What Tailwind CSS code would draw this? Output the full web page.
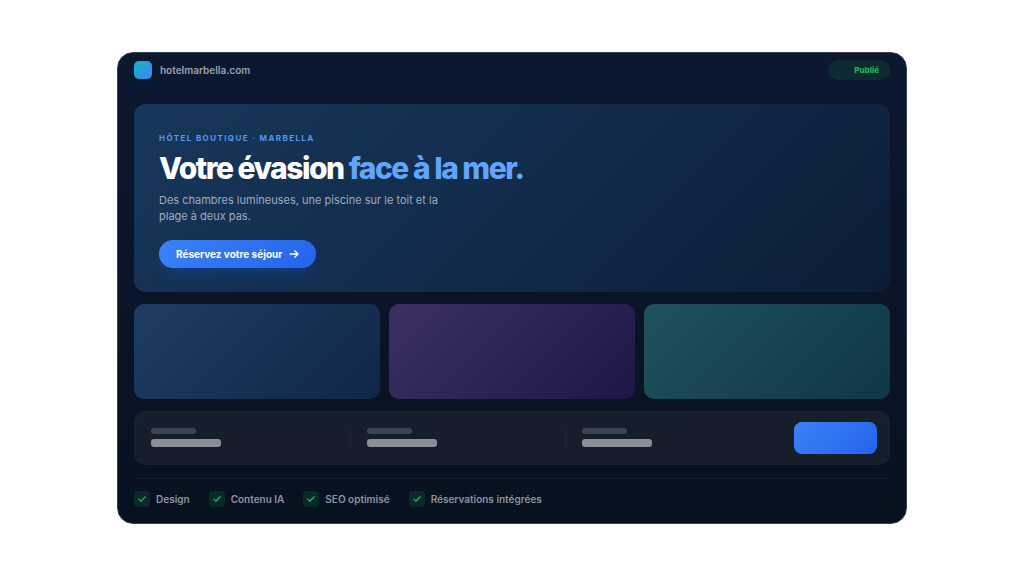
<!DOCTYPE html>
<html lang="fr">
<head>
  <meta charset="UTF-8" />
  <meta name="viewport" content="width=device-width, initial-scale=1.0" />
  <title>Hotel Marbella</title>
  <script src="https://cdn.jsdelivr.net/npm/@tailwindcss/browser@4"></script>
</head>
<body class="min-h-screen flex items-center justify-center bg-white px-[117px] font-['Inter',sans-serif]">

  <div class="w-full max-w-4xl rounded-2xl border border-[#3a4454] bg-linear-to-b from-[#0c1830] to-[#07111f] overflow-hidden">
    <!-- Top bar -->
    <header class="flex items-center justify-between px-4 pt-[7px]">
      <div class="flex items-center gap-2">
        <span class="size-[18px] rounded-[5px] bg-linear-135 from-[#12b3c4] to-[#3b82f6]"></span>
        <span class="text-[10px] leading-4 font-semibold text-[#98a1b0]">hotelmarbella.com</span>
      </div>
      <span class="rounded-full bg-[#0f2a30] pl-[26px] pr-[11px] text-[8px] leading-5 font-extrabold text-[#22b457]">Publié</span>
    </header>

    <main class="flex flex-col gap-3 px-4 pt-6">
      <!-- Hero -->
      <section class="rounded-xl bg-linear-135 from-[#17375a] via-[#122b4b] to-[#0c1c38] px-[25px] pt-7 pb-6">
        <p class="text-[8px] leading-3 font-bold uppercase tracking-[1.4px] text-[#5496ee]">Hôtel boutique · Marbella</p>
        <h1 class="mt-1 text-[30px] leading-10 font-extrabold tracking-tighter text-white">Votre évasion <span class="text-[#60a5fa]">face à la mer.</span></h1>
        <p class="mt-1 max-w-[300px] text-[11px] leading-4 text-[#9dabbd]">Des chambres lumineuses, une piscine sur le toit et la plage à deux pas.</p>
        <button type="button" class="mt-4 flex h-7 items-center gap-[7px] rounded-full bg-linear-135 from-[#3b82f6] to-[#2563eb] px-[17px] text-[10px] font-bold text-white shadow-lg shadow-blue-600/20">
          Réservez votre séjour
          <svg class="size-[10px]" viewBox="0 0 10 10" fill="none" stroke="currentColor" stroke-width="1.3" stroke-linecap="round" stroke-linejoin="round"><path d="M1 5h8M5.8 1.8L9 5L5.8 8.2" /></svg>
        </button>
      </section>

      <!-- Gallery -->
      <section class="grid grid-cols-3 gap-[9px]">
        <div class="h-[95px] rounded-[10px] bg-linear-135 from-[#1e3c62] to-[#0f2749]"></div>
        <div class="h-[95px] rounded-[10px] bg-linear-135 from-[#3c3062] to-[#1f1648]"></div>
        <div class="h-[95px] rounded-[10px] bg-linear-135 from-[#1f525e] to-[#0f3746]"></div>
      </section>

      <!-- Booking bar -->
      <section class="flex items-center gap-3 rounded-xl border border-white/2 bg-[#161d2b] py-[10px] pr-3">
        <div class="grid flex-1 grid-cols-3 divide-x divide-white/4 pb-px">
          <div class="space-y-[5px] px-4">
            <div class="h-[6px] w-[45px] rounded-full bg-[#3e444f]"></div>
            <div class="h-2 w-[70px] rounded-[3px] bg-[#8b8e97]"></div>
          </div>
          <div class="space-y-[5px] px-4">
            <div class="h-[6px] w-[45px] rounded-full bg-[#3e444f]"></div>
            <div class="h-2 w-[70px] rounded-[3px] bg-[#8b8e97]"></div>
          </div>
          <div class="space-y-[5px] px-4">
            <div class="h-[6px] w-[45px] rounded-full bg-[#3e444f]"></div>
            <div class="h-2 w-[70px] rounded-[3px] bg-[#8b8e97]"></div>
          </div>
        </div>
        <button type="button" aria-label="Réserver" class="h-8 w-[83px] rounded-lg bg-linear-135 from-[#3b82f6] to-[#2563eb]"></button>
      </section>
    </main>

    <!-- Checklist -->
    <footer class="mx-4 mt-[13px] border-t border-white/4 pt-3 pb-4">
      <ul class="flex items-center gap-[19px] text-[10px] leading-4 font-semibold text-[#8b93a1]">
        <li class="flex items-center gap-[6px]">
          <span class="flex size-4 items-center justify-center rounded bg-[#0b2929] text-[#25b860]"><svg class="size-[10px]" viewBox="0 0 10 10" fill="none" stroke="currentColor" stroke-width="1.2" stroke-linecap="round" stroke-linejoin="round"><path d="M1.8 5.2l2 2L8.3 2.8" /></svg></span>
          Design
        </li>
        <li class="flex items-center gap-[6px]">
          <span class="flex size-4 items-center justify-center rounded bg-[#0b2929] text-[#25b860]"><svg class="size-[10px]" viewBox="0 0 10 10" fill="none" stroke="currentColor" stroke-width="1.2" stroke-linecap="round" stroke-linejoin="round"><path d="M1.8 5.2l2 2L8.3 2.8" /></svg></span>
          Contenu IA
        </li>
        <li class="flex items-center gap-[6px]">
          <span class="flex size-4 items-center justify-center rounded bg-[#0b2929] text-[#25b860]"><svg class="size-[10px]" viewBox="0 0 10 10" fill="none" stroke="currentColor" stroke-width="1.2" stroke-linecap="round" stroke-linejoin="round"><path d="M1.8 5.2l2 2L8.3 2.8" /></svg></span>
          SEO optimisé
        </li>
        <li class="flex items-center gap-[6px]">
          <span class="flex size-4 items-center justify-center rounded bg-[#0b2929] text-[#25b860]"><svg class="size-[10px]" viewBox="0 0 10 10" fill="none" stroke="currentColor" stroke-width="1.2" stroke-linecap="round" stroke-linejoin="round"><path d="M1.8 5.2l2 2L8.3 2.8" /></svg></span>
          Réservations intégrées
        </li>
      </ul>
    </footer>
  </div>

</body>
</html>
